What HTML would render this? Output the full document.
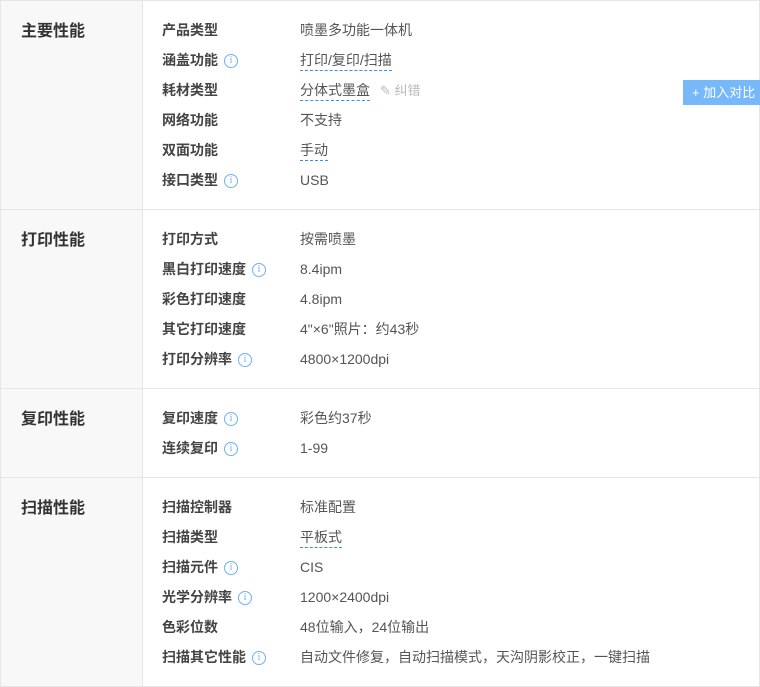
<!DOCTYPE html>
<html><head><meta charset="utf-8"><style>
*{margin:0;padding:0;box-sizing:border-box}
body{width:760px;height:687px;background:#fff;font-family:"Liberation Sans","Noto Sans CJK SC",sans-serif;position:relative;overflow:hidden}
.sec{position:absolute;left:0;width:760px;border:1px solid #e6e6e6;border-bottom:none}
.sec.last{border-bottom:1px solid #e6e6e6}
.left{position:absolute;left:0;top:0;bottom:0;width:142px;background:#f8f8f8;border-right:1px solid #e6e6e6}
.title{position:absolute;left:20px;top:16px;font-size:16px;font-weight:bold;color:#333}
.row{position:absolute;left:162px;height:30px;line-height:30px;font-size:14px;width:560px}
.lab{position:absolute;left:0;font-weight:bold;color:#444}
.val{position:absolute;left:138px;color:#555;white-space:nowrap}
.dash{border-bottom:1px dashed #3a8ee6;line-height:19px;display:inline-block}
.i{display:inline-block;width:14px;height:14px;border:1px solid #6fb1f5;border-radius:50%;color:#6fb1f5;font-size:10px;line-height:12px;text-align:center;font-weight:normal;margin-left:6px;vertical-align:2px;font-family:"Liberation Serif",serif}
.btn{position:absolute;left:683px;top:80px;width:77px;height:25px;background:#77b8fb;color:#fff;font-size:13px;line-height:25px;padding-left:9px}
.fix{color:#bbb;margin-left:10px;font-size:13px}
</style></head><body>

<div class="sec" style="top:0;height:210px"><div class="left"></div><div class="title">主要性能</div></div>
<div class="sec" style="top:209px;height:180px"><div class="left"></div><div class="title">打印性能</div></div>
<div class="sec" style="top:388px;height:90px"><div class="left"></div><div class="title">复印性能</div></div>
<div class="sec last" style="top:477px;height:210px"><div class="left"></div><div class="title">扫描性能</div></div>

<div class="row" style="top:15px"><span class="lab">产品类型</span><span class="val">喷墨多功能一体机</span></div>
<div class="row" style="top:45px"><span class="lab">涵盖功能<span class="i">i</span></span><span class="val"><span class="dash">打印/复印/扫描</span></span></div>
<div class="row" style="top:75px"><span class="lab">耗材类型</span><span class="val"><span class="dash">分体式墨盒</span><span class="fix">✎ 纠错</span></span></div>
<div class="row" style="top:105px"><span class="lab">网络功能</span><span class="val">不支持</span></div>
<div class="row" style="top:135px"><span class="lab">双面功能</span><span class="val"><span class="dash">手动</span></span></div>
<div class="row" style="top:165px"><span class="lab">接口类型<span class="i">i</span></span><span class="val">USB</span></div>

<div class="row" style="top:224px"><span class="lab">打印方式</span><span class="val">按需喷墨</span></div>
<div class="row" style="top:254px"><span class="lab">黑白打印速度<span class="i">i</span></span><span class="val">8.4ipm</span></div>
<div class="row" style="top:284px"><span class="lab">彩色打印速度</span><span class="val">4.8ipm</span></div>
<div class="row" style="top:314px"><span class="lab">其它打印速度</span><span class="val">4"×6"照片：约43秒</span></div>
<div class="row" style="top:344px"><span class="lab">打印分辨率<span class="i">i</span></span><span class="val">4800×1200dpi</span></div>

<div class="row" style="top:403px"><span class="lab">复印速度<span class="i">i</span></span><span class="val">彩色约37秒</span></div>
<div class="row" style="top:433px"><span class="lab">连续复印<span class="i">i</span></span><span class="val">1-99</span></div>

<div class="row" style="top:492px"><span class="lab">扫描控制器</span><span class="val">标准配置</span></div>
<div class="row" style="top:522px"><span class="lab">扫描类型</span><span class="val"><span class="dash">平板式</span></span></div>
<div class="row" style="top:552px"><span class="lab">扫描元件<span class="i">i</span></span><span class="val">CIS</span></div>
<div class="row" style="top:582px"><span class="lab">光学分辨率<span class="i">i</span></span><span class="val">1200×2400dpi</span></div>
<div class="row" style="top:612px"><span class="lab">色彩位数</span><span class="val">48位输入，24位输出</span></div>
<div class="row" style="top:642px"><span class="lab">扫描其它性能<span class="i">i</span></span><span class="val">自动文件修复，自动扫描模式，天沟阴影校正，一键扫描</span></div>

<div class="btn">+ 加入对比</div>
</body></html>
